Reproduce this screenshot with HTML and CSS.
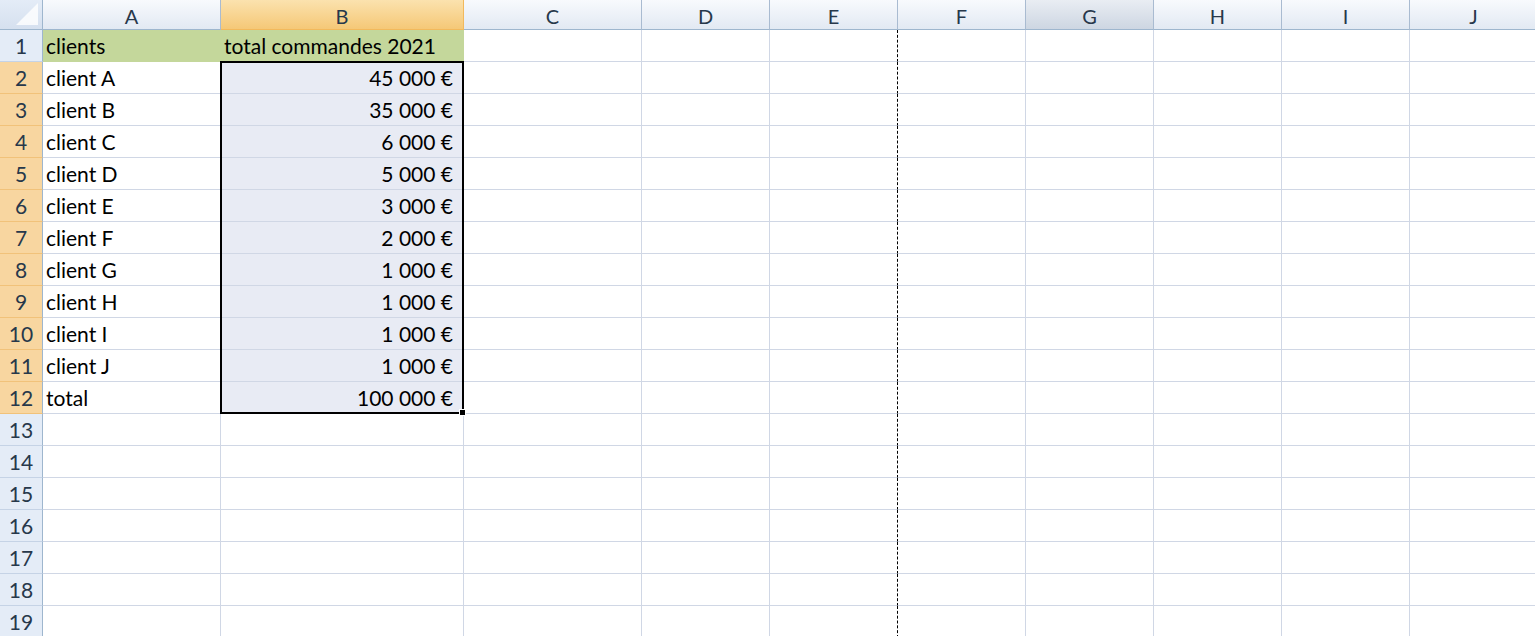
FILE: index.html
```html
<!DOCTYPE html>
<html lang="fr">
<head>
    <meta charset="UTF-8">
    <title>Classeur1</title>
    <link rel="stylesheet" href="styles.css">
</head>
<body>
    <div class="sheet">
        <div class="corner"><span class="corner-tri"></span></div>
        <div class="colhead">A</div>
        <div class="colhead active">B</div>
        <div class="colhead">C</div>
        <div class="colhead">D</div>
        <div class="colhead">E</div>
        <div class="colhead">F</div>
        <div class="colhead hover">G</div>
        <div class="colhead">H</div>
        <div class="colhead">I</div>
        <div class="colhead">J</div>

        <div class="rowhead">1</div><div class="cell green">clients</div><div class="cell green">total commandes 2021</div><div class="cell"></div><div class="cell"></div><div class="cell brk"></div><div class="cell"></div><div class="cell"></div><div class="cell"></div><div class="cell"></div><div class="cell"></div>
        <div class="rowhead active">2</div><div class="cell">client A</div><div class="cell sel num">45 000 €</div><div class="cell"></div><div class="cell"></div><div class="cell brk"></div><div class="cell"></div><div class="cell"></div><div class="cell"></div><div class="cell"></div><div class="cell"></div>
        <div class="rowhead active">3</div><div class="cell">client B</div><div class="cell sel num">35 000 €</div><div class="cell"></div><div class="cell"></div><div class="cell brk"></div><div class="cell"></div><div class="cell"></div><div class="cell"></div><div class="cell"></div><div class="cell"></div>
        <div class="rowhead active">4</div><div class="cell">client C</div><div class="cell sel num">6 000 €</div><div class="cell"></div><div class="cell"></div><div class="cell brk"></div><div class="cell"></div><div class="cell"></div><div class="cell"></div><div class="cell"></div><div class="cell"></div>
        <div class="rowhead active">5</div><div class="cell">client D</div><div class="cell sel num">5 000 €</div><div class="cell"></div><div class="cell"></div><div class="cell brk"></div><div class="cell"></div><div class="cell"></div><div class="cell"></div><div class="cell"></div><div class="cell"></div>
        <div class="rowhead active">6</div><div class="cell">client E</div><div class="cell sel num">3 000 €</div><div class="cell"></div><div class="cell"></div><div class="cell brk"></div><div class="cell"></div><div class="cell"></div><div class="cell"></div><div class="cell"></div><div class="cell"></div>
        <div class="rowhead active">7</div><div class="cell">client F</div><div class="cell sel num">2 000 €</div><div class="cell"></div><div class="cell"></div><div class="cell brk"></div><div class="cell"></div><div class="cell"></div><div class="cell"></div><div class="cell"></div><div class="cell"></div>
        <div class="rowhead active">8</div><div class="cell">client G</div><div class="cell sel num">1 000 €</div><div class="cell"></div><div class="cell"></div><div class="cell brk"></div><div class="cell"></div><div class="cell"></div><div class="cell"></div><div class="cell"></div><div class="cell"></div>
        <div class="rowhead active">9</div><div class="cell">client H</div><div class="cell sel num">1 000 €</div><div class="cell"></div><div class="cell"></div><div class="cell brk"></div><div class="cell"></div><div class="cell"></div><div class="cell"></div><div class="cell"></div><div class="cell"></div>
        <div class="rowhead active">10</div><div class="cell">client I</div><div class="cell sel num">1 000 €</div><div class="cell"></div><div class="cell"></div><div class="cell brk"></div><div class="cell"></div><div class="cell"></div><div class="cell"></div><div class="cell"></div><div class="cell"></div>
        <div class="rowhead active">11</div><div class="cell">client J</div><div class="cell sel num">1 000 €</div><div class="cell"></div><div class="cell"></div><div class="cell brk"></div><div class="cell"></div><div class="cell"></div><div class="cell"></div><div class="cell"></div><div class="cell"></div>
        <div class="rowhead active">12</div><div class="cell">total</div><div class="cell sel num">100 000 €</div><div class="cell"></div><div class="cell"></div><div class="cell brk"></div><div class="cell"></div><div class="cell"></div><div class="cell"></div><div class="cell"></div><div class="cell"></div>
        <div class="rowhead">13</div><div class="cell"></div><div class="cell"></div><div class="cell"></div><div class="cell"></div><div class="cell brk"></div><div class="cell"></div><div class="cell"></div><div class="cell"></div><div class="cell"></div><div class="cell"></div>
        <div class="rowhead">14</div><div class="cell"></div><div class="cell"></div><div class="cell"></div><div class="cell"></div><div class="cell brk"></div><div class="cell"></div><div class="cell"></div><div class="cell"></div><div class="cell"></div><div class="cell"></div>
        <div class="rowhead">15</div><div class="cell"></div><div class="cell"></div><div class="cell"></div><div class="cell"></div><div class="cell brk"></div><div class="cell"></div><div class="cell"></div><div class="cell"></div><div class="cell"></div><div class="cell"></div>
        <div class="rowhead">16</div><div class="cell"></div><div class="cell"></div><div class="cell"></div><div class="cell"></div><div class="cell brk"></div><div class="cell"></div><div class="cell"></div><div class="cell"></div><div class="cell"></div><div class="cell"></div>
        <div class="rowhead">17</div><div class="cell"></div><div class="cell"></div><div class="cell"></div><div class="cell"></div><div class="cell brk"></div><div class="cell"></div><div class="cell"></div><div class="cell"></div><div class="cell"></div><div class="cell"></div>
        <div class="rowhead">18</div><div class="cell"></div><div class="cell"></div><div class="cell"></div><div class="cell"></div><div class="cell brk"></div><div class="cell"></div><div class="cell"></div><div class="cell"></div><div class="cell"></div><div class="cell"></div>
        <div class="rowhead">19</div><div class="cell"></div><div class="cell"></div><div class="cell"></div><div class="cell"></div><div class="cell brk"></div><div class="cell"></div><div class="cell"></div><div class="cell"></div><div class="cell"></div><div class="cell"></div>

        <!-- selected range B2:B12 -->
        <div class="selection"><span class="fill-handle"></span></div>
    </div>
</body>
</html>
```

FILE: styles.css
```css
body {
    margin: 0;
    padding: 0;
    background: #ffffff;
    font-family: Lato, "Open Sans", sans-serif;
    overflow: hidden;
}
.sheet {
    position: relative;
    display: grid;
    grid-template-columns: 43px 178px 243px 178px repeat(7, 128px);
    grid-template-rows: 30px repeat(19, 32px);
    width: 1538px;
}
.sheet > div {
    box-sizing: border-box;
}
.corner {
    position: relative;
    background: linear-gradient(#e4ecf7, #d5e0ef);
    border-right: 1px solid #9eb6ce;
    border-bottom: 1px solid #9eb6ce;
}
.corner-tri {
    position: absolute;
    right: 4px;
    bottom: 4px;
    width: 0;
    height: 0;
    border-left: 22px solid transparent;
    border-bottom: 22px solid #ffffff;
    opacity: .8;
}
.colhead {
    display: flex;
    align-items: center;
    justify-content: center;
    padding-top: 2px;
    font-size: 20px;
    color: #27384b;
    background: linear-gradient(#f8fafd, #e2e9f3);
    border-right: 1px solid #a9bbd1;
    border-bottom: 1px solid #9eb6ce;
}
.colhead.active {
    background: linear-gradient(#fbe2ae, #f5c877);
    border-right-color: #f2b95c;
    border-bottom-color: #f2b95c;
}
.colhead.hover {
    background: linear-gradient(#e9edf3, #cdd6e2);
}
.rowhead {
    display: flex;
    align-items: center;
    justify-content: center;
    font-size: 21px;
    color: #27384b;
    background: #e4ecf7;
    border-right: 1px solid #9eb6ce;
    border-bottom: 1px solid #c5d3e6;
}
.rowhead.active {
    background: #f8d6a0;
    border-bottom-color: #f1c27a;
}
.cell {
    display: flex;
    align-items: center;
    padding: 0 3px;
    font-size: 21px;
    color: #000000;
    white-space: nowrap;
    border-right: 1px solid #d0d7e5;
    border-bottom: 1px solid #d0d7e5;
}
.cell.green {
    background: #c4d79b;
    border-color: #c4d79b;
}
.cell.sel {
    background: #e8ebf4;
}
.cell.num {
    justify-content: flex-end;
    padding-right: 10px;
}
.cell.brk {
    border-right: 1px dashed #000000;
}
.selection {
    position: absolute;
    left: 220px;
    top: 61px;
    width: 244px;
    height: 353px;
    border: 2px solid #000000;
    pointer-events: none;
}
.fill-handle {
    position: absolute;
    right: -4px;
    bottom: -4px;
    width: 5px;
    height: 5px;
    background: #000000;
    border: 1px solid #ffffff;
}
```
